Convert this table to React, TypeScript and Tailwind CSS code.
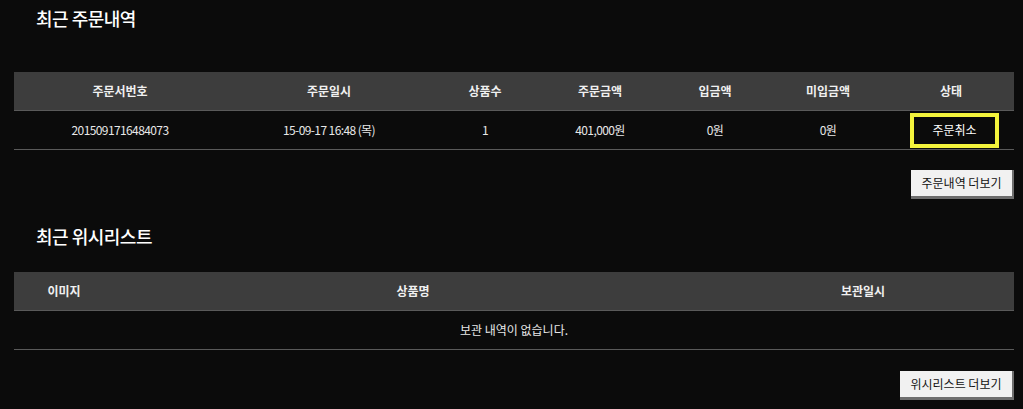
import React from 'react';

const FONT = { fontFamily: '"Noto Sans CJK KR", "Noto Sans", sans-serif' };

const ORDER_COLS = [
  { label: '주문서번호', w: 'w-[212px]' },
  { label: '주문일시', w: 'w-[206px]' },
  { label: '상품수', w: 'w-[106px]' },
  { label: '주문금액', w: 'w-[124px]' },
  { label: '입금액', w: 'w-[106px]' },
  { label: '미입금액', w: 'w-[120px]' },
  { label: '상태', w: 'flex-1' },
];

const ORDER_ROW = ['2015091716484073', '15-09-17 16:48 (목)', '1', '401,000원', '0원', '0원'];

const WISH_COLS = [
  { label: '이미지', w: 'w-[100px]' },
  { label: '상품명', w: 'w-[598px]' },
  { label: '보관일시', w: 'flex-1' },
];

const SectionTitle: React.FC<{ children: React.ReactNode }> = ({ children }) => (
  <h2 className="pl-[36px] text-[18px] font-medium leading-[20px] text-white tracking-[-0.5px]">{children}</h2>
);

const MoreButton: React.FC<{ label: string; w: string }> = ({ label, w }) => (
  <div className="flex justify-end pr-[9px]">
    <button
      className={`${w} h-[29px] bg-[#f1f1f1] border-r-2 border-b-[3px] border-[#6e6e6e] text-[12px] text-[#111] leading-none`}
      style={FONT}
    >
      {label}
    </button>
  </div>
);

export default function App() {
  return (
    <div className="w-[1023px] h-[409px] bg-[#0b0b0b] overflow-hidden" style={FONT}>
      <div className="pt-[8px]">
        <SectionTitle>최근 주문내역</SectionTitle>
      </div>

      {/* order table */}
      <div className="mt-[44px] mx-[14px] w-[1000px]">
        <div className="flex h-[39px] items-center bg-[#3d3d3d] border-b border-[#5a5a5a]">
          {ORDER_COLS.map((c) => (
            <div key={c.label} className={`${c.w} text-center text-[12px] font-bold text-[#f0f0f0]`}>
              {c.label}
            </div>
          ))}
        </div>
        <div className="flex h-[39px] items-center border-b border-[#5a5a5a]">
          {ORDER_ROW.map((v, i) => (
            <div key={i} className={`${ORDER_COLS[i].w} text-center text-[12px] text-[#e8e8e8] tracking-[-0.6px]`}>
              {v}
            </div>
          ))}
          <div className="flex-1 flex justify-center">
            <div className="ml-[7px] w-[89px] h-[35px] border-[4px] border-[#f4f43c] flex items-center justify-center text-[12px] text-white">
              주문취소
            </div>
          </div>
        </div>
      </div>

      <div className="mt-[20px]">
        <MoreButton label="주문내역 더보기" w="w-[103px]" />
      </div>

      <div className="mt-[27px]">
        <SectionTitle>최근 위시리스트</SectionTitle>
      </div>

      {/* wishlist table */}
      <div className="mt-[26px] mx-[14px] w-[1000px]">
        <div className="flex h-[39px] items-center bg-[#3d3d3d] border-b border-[#5a5a5a]">
          {WISH_COLS.map((c) => (
            <div key={c.label} className={`${c.w} text-center text-[12px] font-bold text-[#f0f0f0]`}>
              {c.label}
            </div>
          ))}
        </div>
        <div className="flex h-[39px] items-center justify-center border-b border-[#5a5a5a] text-[12px] text-[#e8e8e8]">
          보관 내역이 없습니다.
        </div>
      </div>

      <div className="mt-[21px]">
        <MoreButton label="위시리스트 더보기" w="w-[114px]" />
      </div>
    </div>
  );
}
